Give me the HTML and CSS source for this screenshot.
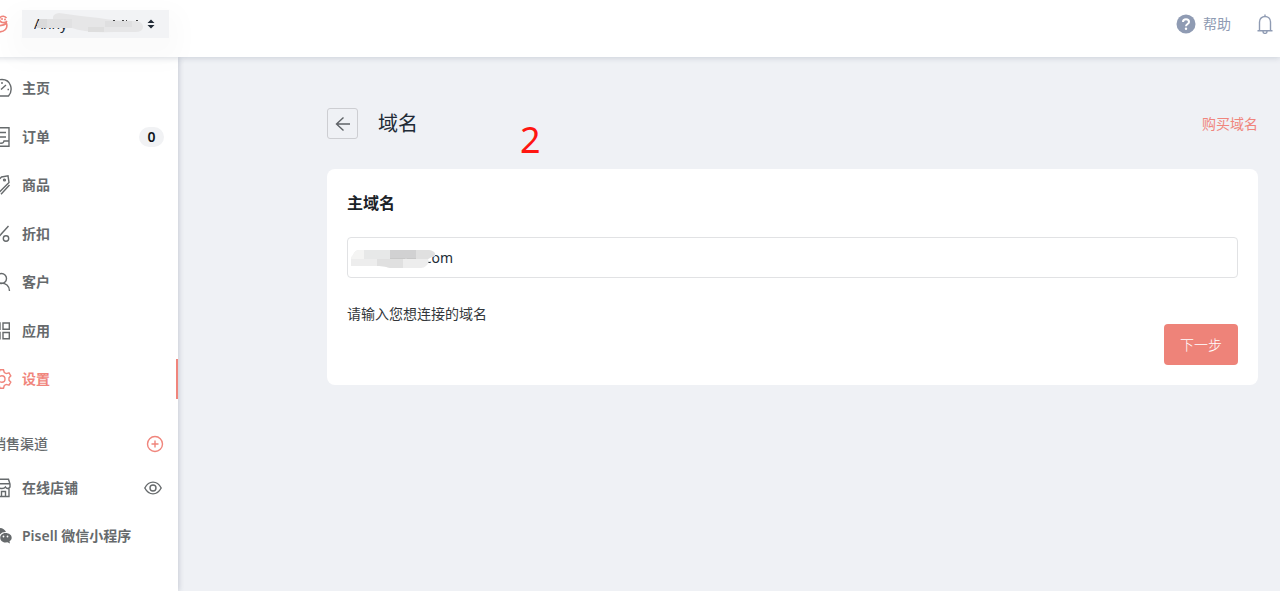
FILE: index.html
```html
<!DOCTYPE html>
<html lang="zh-CN">
  <head>
    <meta charset="UTF-8" />
    <meta name="viewport" content="width=device-width, initial-scale=1.0" />
    <title>域名</title>
    <link rel="stylesheet" href="styles.css" />
  </head>
  <body>
    <header class="header">
      <svg class="logo" width="20" height="20" viewBox="0 0 20 20">
        <path d="M18.500 4C17 2 14 1.500 12 3.500C10.500 6 12 8 14.500 8.500C16.500 8.800 18 8.500 19 7M3 11C8 12.500 15 12 18.500 9.500C20 14 17 18 10 18" />
        <circle class="logo-dot" cx="14" cy="5" r="1" />
        <circle class="logo-dot" cx="17" cy="5.500" r="1" />
      </svg>
      <div class="store">
        <select class="store-select" aria-label="店铺">
          <option>Anny</option>
        </select>
        <svg class="store-mask" width="112" height="28" viewBox="0 0 112 28">
          <path fill="#e6e6e7" d="M7 9Q5 9 4 13L2 18H38Q50 23 80 22H101Q109 22 109 17Q109 12 102 11Q80 11 65 8Q45 6 25 3Q18 4 19 9Z" />
          <path fill="#dadadb" d="M6 9H13V18H2Z" />
          <path fill="#e1e1e2" d="M13 9H38V18H13Z" />
          <path fill="#dfdfe0" d="M71 11H98V17H71Z" />
          <path fill="#dedede" d="M54 17H70V22H54Z" />
          <path fill="#444" d="M79 10H81V11H79ZM88 10H90V11H88ZM92 10H93V11H92ZM102 10H104V11H102Z" />
        </svg>
        <svg class="store-arrows" width="8" height="10" viewBox="0 0 8 10">
          <path d="M4 0.500L7.500 4H0.500ZM4 9.500L0.500 6H7.500Z" />
        </svg>
      </div>
      <a class="help" href="#">
        <svg width="20" height="20" viewBox="0 0 20 20">
          <circle cx="10" cy="10" r="9.500" fill="#8f9bb3" />
          <path d="M7 8C7 4.300 13 4.300 13 8C13 10 10 10 10 12.200" fill="none" stroke="#fff" stroke-width="2" />
          <circle cx="10" cy="14.700" r="1.200" fill="#fff" />
        </svg>
        帮助
      </a>
      <button class="bell" type="button" aria-label="通知">
        <svg class="icon" width="16" height="20" viewBox="0 0 16 20">
          <path d="M8 0.500V2.500M2.500 16.500V8C2.500 0.700 13.500 0.700 13.500 8V16.500M0.500 16.700H15.500M6 17.500C6 20 10 20 10 17.500" />
        </svg>
      </button>
    </header>

    <div class="layout">
      <nav class="sidebar">
        <ul class="nav-list nav-main">
          <li><a class="nav-item" href="#">
            <svg class="icon" width="20" height="20" viewBox="0 0 20 20">
              <path d="M4 18C-1.500 12 1 1.500 10 1.500C19 1.500 21.500 12 16.500 18ZM9 11.500L14 7M10 4V6M15.500 11.500H17M4 11.500H2.500M5 6L6.500 7.500" />
            </svg>
            主页</a></li>
          <li><a class="nav-item" href="#">
            <svg class="icon" width="20" height="20" viewBox="0 0 20 20">
              <path d="M2 .8H17V19.200H2ZM5 5.500H14M5 10H14M2 14H6C6.500 17 11.500 17 12 14H17" />
            </svg>
            订单 <span class="badge">0</span></a></li>
          <li><a class="nav-item" href="#">
            <svg class="icon" width="20" height="20" viewBox="0 0 20 20">
              <path d="M9.500 2L16 .8L17 7.500L7.500 17L1 10.500ZM17.500 10L9 19.300" />
              <circle cx="12.500" cy="5" r=".9" />
            </svg>
            商品</a></li>
          <li><a class="nav-item" href="#">
            <svg class="icon" width="20" height="20" viewBox="0 0 20 20">
              <path d="M16.500 2L2.500 17.500" />
              <circle cx="4" cy="5" r="2.700" />
              <circle cx="14" cy="14.500" r="2.700" />
            </svg>
            折扣</a></li>
          <li><a class="nav-item" href="#">
            <svg class="icon" width="20" height="20" viewBox="0 0 20 20">
              <circle cx="9.500" cy="6.500" r="5" />
              <path d="M1.500 19C1.500 8.500 17.500 8.500 17.500 19" />
            </svg>
            客户</a></li>
          <li><a class="nav-item" href="#">
            <svg class="icon" width="20" height="20" viewBox="0 0 20 20">
              <path d="M1.500 2H8V8.300H1.500ZM11 2H17.300V8.300H11ZM1.500 11.500H8V17.800H1.500ZM11 11.500H17.300V17.800H11Z" />
            </svg>
            应用</a></li>
          <li><a class="nav-item active" href="#" aria-current="page">
            <svg class="icon" width="20" height="20" viewBox="0 0 20 20">
              <path d="M8 .8H11.500L12.300 3.500L14.300 4.600L17 3.800L18.800 6.800L17 8.800V11.200L18.800 13.200L17 16.200L14.300 15.400L12.300 16.500L11.500 19.200H8L7.200 16.500L5.200 15.400L2.500 16.200L.7 13.200L2.500 11.200V8.800L.7 6.800L2.500 3.800L5.200 4.600L7.200 3.500Z" />
              <circle cx="9.800" cy="10" r="3.200" />
            </svg>
            设置</a></li>
        </ul>

        <div class="channels">
          <h2>销售渠道</h2>
          <button class="icon-btn" type="button" aria-label="添加销售渠道">
            <svg class="icon" width="18" height="18" viewBox="0 0 18 18">
              <circle cx="9" cy="9" r="7.500" />
              <path d="M9 5.500V12.500M5.500 9H12.500" />
            </svg>
          </button>
        </div>
        <ul class="nav-list nav-channels">
          <li><a class="nav-item" href="#">
            <svg class="icon" width="20" height="20" viewBox="0 0 20 20">
              <path d="M2 1.200H16.500L18 6V9C16.500 11 14.500 11 13.500 9C12 11 8 11 6.500 9C5 11 2 11 1 9V6ZM1 5.800H18M2 10.500V18.500H17V10.500M9.500 18V13.500H13.500V18" />
            </svg>
            在线店铺
            <svg class="icon eye" width="18" height="18" viewBox="0 0 18 18">
              <path d="M.8 9C5 1.200 13 1.200 17.200 9C13 16.800 5 16.800 .8 9Z" />
              <circle cx="9" cy="9" r="3" />
            </svg></a></li>
          <li><a class="nav-item" href="#">
            <svg width="20" height="20" viewBox="0 0 20 20" fill="#666a6c">
              <path d="M7.500 2C1 2-1 8 2.500 11.500L2 14L4.800 12.700L7 13C6.500 8 10 5.800 14 6C13 3.500 10.500 2 7.500 2Z" />
              <path d="M13.500 7C6.500 7 6.500 16.500 13.500 16.500L15.500 16.300L18 17.500L17.500 15.300C22 12 19 7 13.500 7Z" />
              <circle cx="11.500" cy="10.500" r=".9" fill="#fff" />
              <circle cx="15.500" cy="10.500" r=".9" fill="#fff" />
            </svg>
            Pisell 微信小程序</a></li>
        </ul>
      </nav>

      <main class="content">
        <div class="page-head">
          <button class="back" type="button" aria-label="返回">
            <svg class="icon" width="16" height="16" viewBox="0 0 16 16">
              <path d="M15 8H1.500M8.500 1.500L1.500 8L8.500 14.500" />
            </svg>
          </button>
          <h1>域名</h1>
          <a class="buy" href="#">购买域名</a>
          <span class="step">2</span>
        </div>

        <form class="card">
          <label class="card-title" for="domain">主域名</label>
          <div class="field">
            <input id="domain" type="text" value=".com" aria-describedby="hint" />
            <svg class="field-mask" width="86" height="20" viewBox="0 0 86 20">
              <clipPath id="smudge">
                <path d="M8 1H78Q85 2 84 7Q80 8 77 10Q79 14 75 17Q73 19 70 19H39Q33 17 28 17H0V10Q0 8 2 6Q4 1 8 1Z" />
              </clipPath>
              <g clip-path="url(#smudge)">
                <path fill="#ededed" d="M0 0H86V20H0Z" />
                <path fill="#f4f4f3" d="M0 0H13V10H0Z" />
                <path fill="#e7e8e8" d="M13 0H39V10H13Z" />
                <path fill="#d1d1d2" d="M39 0H65V10H39Z" />
                <path fill="#e0e0e0" d="M65 0H86V10H65ZM26 10H52V20H26Z" />
                <path fill="#c8c8c8" d="M39 9H54V10H39ZM56 9H65V10H56Z" />
              </g>
            </svg>
          </div>
          <p class="hint" id="hint">请输入您想连接的域名</p>
          <div class="actions">
            <button class="btn" type="submit">下一步</button>
          </div>
        </form>
      </main>
    </div>
  </body>
</html>
```
FILE: styles.css
```css
* {
  margin: 0;
  padding: 0;
  box-sizing: border-box;
}

body {
  min-height: 100vh;
  display: flex;
  flex-direction: column;
  overflow-x: hidden;
  background: #eff1f5;
  color: #212b36;
  font-family: "Noto Sans", "Noto Sans CJK SC", sans-serif;
  font-size: 14px;
  line-height: 20px;
}

a {
  color: inherit;
  text-decoration: none;
}

button,
input,
select {
  font: inherit;
  color: inherit;
}

button {
  border: none;
  background: none;
  cursor: pointer;
}

svg {
  display: block;
  flex-shrink: 0;
}

.icon {
  fill: none;
  stroke: currentColor;
  stroke-width: 1.4;
}

/* top bar */
.header {
  position: relative;
  z-index: 1;
  display: flex;
  align-items: center;
  height: 57px;
  margin-left: -12px;
  padding: 0 7px 10px 0;
  background: #fff;
  color: #8f9bb3;
  box-shadow: 0 1px 6px rgba(60, 75, 100, 0.2);
}

.logo {
  margin-right: 14px;
  fill: none;
  stroke: #f0857c;
  stroke-width: 1.6;
}

.logo-dot {
  fill: #f0857c;
  stroke: none;
}

.store {
  position: relative;
  width: 147px;
  background: #f2f3f5;
  box-shadow: 0 12px 24px 12px rgba(0, 0, 0, 0.02);
}

.store-select {
  display: block;
  appearance: none;
  width: 100%;
  height: 28px;
  padding: 0 24px 0 12px;
  border: none;
  background: none;
  color: #212b36;
}

.store-mask {
  position: absolute;
  left: 12px;
  top: 0;
  pointer-events: none;
}

.store-arrows {
  position: absolute;
  right: 14px;
  top: 9px;
  fill: #212b36;
  pointer-events: none;
}

.help {
  display: flex;
  align-items: center;
  gap: 7px;
  margin-left: auto;
}

.bell {
  margin-left: 26px;
  height: 20px;
}

/* sidebar */
.layout {
  flex: 1;
  display: flex;
}

.sidebar {
  flex: none;
  width: 178px;
  padding-top: 11px;
  background: #fff;
  color: #666a6c;
  font-weight: 600;
  box-shadow: 1px 0 5px rgba(60, 75, 100, 0.22);
}

.nav-list {
  display: flex;
  flex-direction: column;
  justify-content: space-between;
  margin-left: -8px;
  list-style: none;
}

.nav-main {
  min-height: 331px;
}

.nav-channels {
  gap: 8px;
}

.nav-item {
  display: flex;
  align-items: center;
  gap: 10px;
  height: 40px;
  padding-right: 14px;
  border-right: 2px solid transparent;
}

.nav-item.active {
  color: #f0857c;
  border-color: #f0857c;
}

.badge {
  margin-left: auto;
  margin-right: -2px;
  width: 25px;
  border-radius: 10px;
  background: #f1f2f4;
  color: #10161c;
  text-align: center;
}

.eye {
  margin-left: auto;
}

.channels {
  display: flex;
  align-items: center;
  justify-content: space-between;
  margin: 35px 14px 14px -8px;
}

.channels h2 {
  font-size: 14px;
  font-weight: 500;
}

.icon-btn {
  color: #f0857c;
}

/* page */
.content {
  flex: 1;
  padding: 51px 22px 22px 149px;
}

.page-head {
  position: relative;
  display: flex;
  align-items: center;
  gap: 20px;
  margin-bottom: 30px;
}

.back {
  display: flex;
  align-items: center;
  justify-content: center;
  width: 31px;
  height: 31px;
  border: 1px solid #cdced2;
  border-radius: 3px;
  color: #5f6367;
}

.page-head h1 {
  font-size: 20px;
  font-weight: 400;
}

.buy {
  margin-left: auto;
  color: #f0857c;
}

.step {
  position: absolute;
  left: 193px;
  top: 14px;
  color: #ff1610;
  font-size: 36px;
  line-height: 36px;
}

.card {
  padding: 24px 20px 20px;
  border-radius: 8px;
  background: #fff;
}

.card-title {
  display: block;
  margin-bottom: 24px;
  color: #1b2228;
  font-size: 16px;
  font-weight: 700;
}

.field {
  position: relative;
  margin-bottom: 26px;
}

.field input {
  display: block;
  width: 100%;
  height: 41px;
  padding: 0 12px 0 73px;
  border: 1px solid #e1e2e4;
  border-radius: 4px;
  background: #fff;
}

.field-mask {
  position: absolute;
  left: 4px;
  top: 12px;
  pointer-events: none;
}

.hint {
  color: #33373b;
}

.actions {
  display: flex;
  justify-content: flex-end;
}

.btn {
  height: 41px;
  padding: 0 16px;
  border-radius: 4px;
  background: #ee8379;
  color: #fff;
  font-weight: 300;
}
```
